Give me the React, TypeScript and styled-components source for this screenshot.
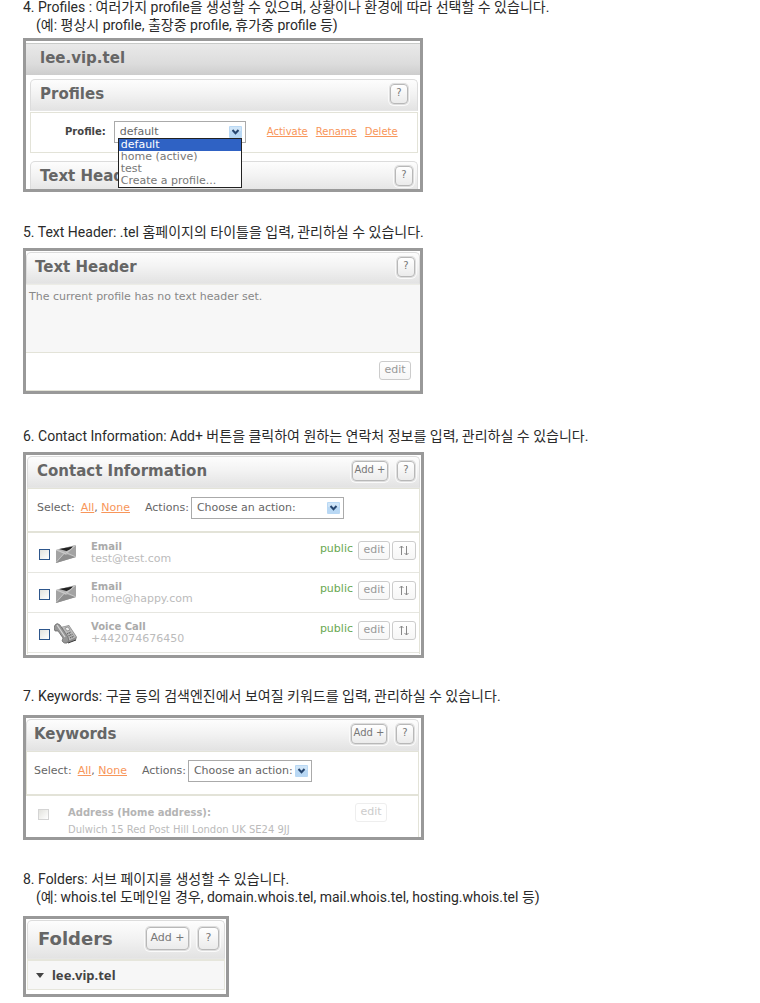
import React from "react";
import styled, { createGlobalStyle, css } from "styled-components";

const ui = `Verdana, "DejaVu Sans", sans-serif`;

const GlobalStyle = createGlobalStyle`
  *, *::before, *::after { box-sizing: border-box; }
  body { margin: 0; background: #fff; color: #333; }
  button, select { font: inherit; color: inherit; margin: 0; }
`;

const Page = styled.main`
  margin-top: -2px;
  padding: 0 23px 6px;
  font-family: ${ui};
  font-size: 11px;
  line-height: 12px;
`;

const Section = styled.section<{ $before?: number }>`
  padding-top: ${(p) => p.$before ?? 0}px;
`;

const Caption = styled.h2<{ $after: number }>`
  margin: 0 0 ${(p) => p.$after}px;
  font: 400 14px/18px Roboto, "Noto Sans CJK KR", sans-serif;
  color: #2a2a2a;
`;

const CaptionNote = styled.span`
  display: block;
  padding-left: 13px;
`;

const Panel = styled.div<{ $width: number; $inset: string }>`
  max-width: ${(p) => p.$width}px;
  border: 3px solid #999;
  padding: ${(p) => p.$inset};
  overflow: hidden;
`;

const DomainBar = styled.div`
  display: flex;
  align-items: center;
  height: 32px;
  padding: 0 14px 4px;
  margin-bottom: 4px;
  border-top: 1px solid #c8cac8;
  background: linear-gradient(#e9e9e9, #dcdcdc 65%, #cdcdcd);
  font-size: 15px;
  font-weight: 700;
  color: #666;
`;

const Header = styled.header<{ $tall?: boolean; $left: number; $right?: number }>`
  display: flex;
  align-items: center;
  gap: 7px;
  height: ${(p) => (p.$tall ? 39 : 32)}px;
  padding: 0 ${(p) => p.$right ?? 4}px 2px ${(p) => p.$left}px;
  border: 1px solid #dcdcdc;
  border-bottom-color: #e6e6e6;
  border-radius: 5px 5px 0 0;
  background: linear-gradient(#fdfdfd, #f3f3f3 45%, #e3e3e3);
`;

const Title = styled.h3<{ $large?: boolean }>`
  flex: 1;
  margin: 0;
  font-size: ${(p) => (p.$large ? 18 : 15)}px;
  line-height: 20px;
  font-weight: 700;
  color: #666;
`;

const HeaderButton = styled.button<{ $large?: boolean; $wide?: boolean }>`
  flex: none;
  width: ${(p) => (p.$wide ? (p.$large ? 43 : 36) : p.$large ? 21 : 18)}px;
  height: ${(p) => (p.$large ? 23 : 20)}px;
  padding: 0 0 2px;
  border: 1px solid #b8b8b8;
  border-radius: 4px;
  background: linear-gradient(#fff, #ebebeb);
  box-shadow: 0 0 0 1px #dedede, 0 0 0 2px #fafafa;
  font-size: ${(p) => (p.$large ? 11 : 10)}px;
  line-height: 12px;
  color: #777;
  white-space: nowrap;
`;

const HeaderButtons = styled.div`
  display: flex;
  gap: 9px;
`;

const ProfileGroup = styled.div`
  padding: 0 2px 0 4px;
`;

const ProfileBody = styled.div`
  display: flex;
  align-items: center;
  height: 41px;
  margin: 1px 0 8px;
  padding: 0 18px 2px 34px;
  border: 1px solid #e3e3d8;
`;

const FieldLabel = styled.label`
  margin-right: 8px;
  font-size: 10px;
  font-weight: 700;
  color: #444;
`;

const SelectBox = styled.span<{ $width: number }>`
  position: relative;
  display: block;
  flex: none;
  width: ${(p) => p.$width}px;
`;

const Select = styled.select`
  appearance: none;
  display: block;
  width: 100%;
  height: 22px;
  padding: 1px 16px 0 5px;
  border: 1px solid #aaa;
  border-radius: 0;
  background: #fff;
  color: #666;
  font-size: 11px;
`;

const Arrow = styled.svg`
  position: absolute;
  top: 5px;
  right: 4px;
  pointer-events: none;
`;

const Menu = styled.ul`
  position: absolute;
  top: 17px;
  left: 4px;
  width: 124px;
  margin: 0;
  padding: 0;
  list-style: none;
  border: 1px solid #222;
  background: #fff;
  color: #777;
  z-index: 1;
`;

const MenuItem = styled.li<{ $on?: boolean }>`
  padding: 0 2px;
  line-height: 12px;
  height: 12px;
  ${(p) => p.$on && css`background: #2f62c4; color: #fff;`}
`;

const Link = styled.a`
  color: #f8965a;
  text-decoration: underline;
`;

const LinkRow = styled.nav`
  display: flex;
  gap: 8px;
  margin-left: 21px;
  font-size: 10px;
`;

const ClippedHeader = styled.div`
  height: 28px;
  overflow: hidden;
`;

const TextBody = styled.p`
  margin: 0;
  height: 69px;
  padding: 6px 3px;
  border-top: 1px solid #ecece6;
  border-bottom: 1px solid #e3e3d8;
  background: #f7f7f7;
  color: #888;
`;

const Footer = styled.div`
  display: flex;
  justify-content: flex-end;
  height: 38px;
  padding: 8px 9px 0;
  border-bottom: 1px solid #e3e3d8;
`;

const SmallButton = styled.button<{ $faint?: boolean; $narrow?: boolean }>`
  flex: none;
  display: flex;
  align-items: center;
  justify-content: center;
  width: ${(p) => (p.$narrow ? 24 : 32)}px;
  height: 19px;
  padding: 0 0 1px;
  border: 1px solid #ccc;
  border-radius: 3px;
  background: linear-gradient(#fff, #f6f6f6);
  color: #999;
  ${(p) => p.$faint && css`border-color: #eee; background: #fff; color: #ccc;`}
`;

const Toolbar = styled.div<{ $left: number }>`
  display: flex;
  align-items: center;
  height: 45px;
  padding: 0 0 5px ${(p) => p.$left}px;
  border: solid #e3e3d8;
  border-width: 1px 1px 2px;
  color: #666;
`;

const Picks = styled.span`
  margin: 0 15px 0 6px;
`;

const ActionLabel = styled.label`
  margin-right: 2px;
`;

const List = styled.ul`
  margin: 0;
  padding: 0 0 1px;
  list-style: none;
  border: solid #e3e3d8;
  border-width: 0 1px;
`;

const Contact = styled.li`
  display: flex;
  align-items: flex-start;
  height: 40px;
  padding: 8px 3px 0 11px;
  border-bottom: 1px solid #e6e6e0;
`;

const Check = styled.input<{ $faint?: boolean }>`
  appearance: none;
  flex: none;
  width: 11px;
  height: 11px;
  margin: ${(p) => (p.$faint ? 2 : 8)}px 0 0;
  border: 1px solid ${(p) => (p.$faint ? "#d4d4d4" : "#2d568c")};
  background: linear-gradient(135deg, #e2e2dd, #fff);
`;

const Picture = styled.svg`
  flex: none;
  margin: 1px 14px 0 4px;
`;

const Info = styled.label`
  flex: 1;
  color: #bbb;
  strong { display: block; font-size: 10px; color: #aaa; }
`;

const Visibility = styled.span`
  margin: 2px 5px 0 0;
  color: #69a850;
`;

const Actions = styled.div`
  display: flex;
  gap: 2px;
`;

const Keyword = styled.div`
  display: flex;
  height: 41px;
  padding: 11px 31px 0 12px;
  border-right: 1px solid #e3e3d8;
`;

const KeywordInfo = styled.label`
  flex: 1;
  margin-left: 19px;
  font-size: 10px;
  color: #bbb;
  strong { display: block; margin-bottom: 5px; color: #b4b4b4; }
`;

const KeywordAction = styled.div`
  margin-top: -4px;
`;

const Folder = styled.div`
  display: flex;
  align-items: center;
  gap: 8px;
  height: 31px;
  margin-bottom: 4px;
  padding: 0 8px;
  border: 2px solid #e6e6dc;
  border-width: 2px 1px 1px;
  background: #f7f7f7;
  font: 700 13px/16px "Noto Sans", sans-serif;
  color: #444;
`;

const DropArrow = () => (
  <Arrow width="13" height="12" viewBox="0 0 13 12" aria-hidden="true">
    <rect width="13" height="12" rx="1" fill="#b9d8f4" />
    <rect x="1" y="1" width="11" height="4" fill="#cfe5f8" />
    <path d="M3.5 4 6.5 7.2 9.5 4" fill="none" stroke="#27466f" strokeWidth="2" />
  </Arrow>
);

const Envelope = () => (
  <Picture width="23" height="22" viewBox="0 0 23 22" aria-hidden="true">
    <path d="M2 8 22 3v12L2 21z" fill="#a3a3a3" />
    <path d="M2 20.5 10.5 12 22 15 2 21z" fill="#8e8e8e" />
    <path d="M2 8 22 3 12 13z" fill="#b5b5b5" />
    <path d="M5 7 19 4.5 16 7.5 12.5 9z" fill="#222" />
    <path d="m2 8 9.5 3.5L22 3M2 20.5l8-9M13 11l9 4" fill="none" stroke="#dcdcdc" strokeWidth=".6" />
  </Picture>
);

const Phone = () => (
  <Picture width="23" height="22" viewBox="0 0 23 22" aria-hidden="true">
    <path d="m7 5 8-2 8 12-1 3-9 3-7-9z" fill="#8c8c8c" />
    <path d="m8 5 7-1 7 11-8 4z" fill="#bcbcbc" />
    <path d="m11 6 3-1 2 3-3 1z" fill="#eee" stroke="#777" strokeWidth=".6" />
    <path d="m13 12 4-2M14.5 14l4-2M16 16l4-2" stroke="#666" strokeWidth="1.3" strokeDasharray="1.3 .6" />
    <path d="M1 3q2-3 5 0l8 12q2 4-1 6-3 1-5-2l1-3-5-7-3 0q-2-3 0-6z" fill="#969696" stroke="#666" strokeWidth=".7" />
    <path d="m3 3 8 12" stroke="#d6d6d6" strokeWidth="1.3" />
    <path d="m14 21 8-3" stroke="#333" />
  </Picture>
);

const MoveIcon = () => (
  <svg width="12" height="12" viewBox="0 0 12 12" aria-hidden="true">
    <path d="M3.5 11V2M1.5 4l2-2 2 2M8.5 2v9M6.5 9l2 2 2-2" fill="none" stroke="#888" />
  </svg>
);

const Help = ({ large }: { large?: boolean }) => (
  <HeaderButton type="button" $large={large} aria-label="Help">?</HeaderButton>
);

const ActionPicker = ({ id, width, left }: { id: string; width: number; left: number }) => (
  <Toolbar $left={left}>
    <span>Select:</span>
    <Picks>
      <Link href="#all">All</Link>, <Link href="#none">None</Link>
    </Picks>
    <ActionLabel htmlFor={id}>Actions:</ActionLabel>
    <SelectBox $width={width}>
      <Select id={id}>
        <option>Choose an action:</option>
      </Select>
      <DropArrow />
    </SelectBox>
  </Toolbar>
);

const contacts = [
  { id: "c1", kind: "Email", value: "test@test.com", Icon: Envelope },
  { id: "c2", kind: "Email", value: "home@happy.com", Icon: Envelope },
  { id: "c3", kind: "Voice Call", value: "+442074676450", Icon: Phone },
];

const profiles = ["default", "home (active)", "test", "Create a profile..."];

export default function App() {
  return (
    <>
      <GlobalStyle />
      <Page>
        <Section>
          <Caption $after={4}>
            4. Profiles : 여러가지 profile을 생성할 수 있으며, 상황이나 환경에 따라 선택할 수 있습니다.
            <CaptionNote>(예: 평상시 profile, 출장중 profile, 휴가중 profile 등)</CaptionNote>
          </Caption>
          <Panel $width={400} $inset="2px 0 0">
            <DomainBar>lee.vip.tel</DomainBar>
            <ProfileGroup>
              <Header $left={9} $right={9}>
                <Title>Profiles</Title>
                <Help />
              </Header>
              <ProfileBody>
                <FieldLabel htmlFor="profile">Profile:</FieldLabel>
                <SelectBox $width={132}>
                  <Select id="profile" defaultValue="default">
                    {profiles.map((p) => <option key={p}>{p}</option>)}
                  </Select>
                  <DropArrow />
                  <Menu role="listbox" aria-label="Profile">
                    {profiles.map((p, i) => (
                      <MenuItem key={p} role="option" aria-selected={i === 0} $on={i === 0}>{p}</MenuItem>
                    ))}
                  </Menu>
                </SelectBox>
                <LinkRow>
                  <Link href="#activate">Activate</Link>
                  <Link href="#rename">Rename</Link>
                  <Link href="#delete">Delete</Link>
                </LinkRow>
              </ProfileBody>
              <ClippedHeader>
                <Header $left={9}>
                  <Title>Text Header</Title>
                  <Help />
                </Header>
              </ClippedHeader>
            </ProfileGroup>
          </Panel>
        </Section>

        <Section $before={31}>
          <Caption $after={7}>5. Text Header: .tel 홈페이지의 타이틀을 입력, 관리하실 수 있습니다.</Caption>
          <Panel $width={400} $inset="1px 0 0">
            <Header $left={8}>
              <Title>Text Header</Title>
              <Help />
            </Header>
            <TextBody>The current profile has no text header set.</TextBody>
            <Footer>
              <SmallButton type="button">edit</SmallButton>
            </Footer>
          </Panel>
        </Section>

        <Section $before={33}>
          <Caption $after={7}>6. Contact Information: Add+ 버튼을 클릭하여 원하는 연락처 정보를 입력, 관리하실 수 있습니다.</Caption>
          <Panel $width={401} $inset="1px 1px 1px">
            <Header $left={9}>
              <Title>Contact Information</Title>
              <HeaderButtons>
                <HeaderButton type="button" $wide>Add +</HeaderButton>
                <Help />
              </HeaderButtons>
            </Header>
            <ActionPicker id="contact-action" width={153} left={9} />
            <List>
              {contacts.map(({ id, kind, value, Icon }) => (
                <Contact key={id}>
                  <Check type="checkbox" id={id} />
                  <Icon />
                  <Info htmlFor={id}><strong>{kind}</strong>{value}</Info>
                  <Visibility>public</Visibility>
                  <Actions>
                    <SmallButton type="button">edit</SmallButton>
                    <SmallButton type="button" $narrow aria-label="Move"><MoveIcon /></SmallButton>
                  </Actions>
                </Contact>
              ))}
            </List>
          </Panel>
        </Section>

        <Section $before={29}>
          <Caption $after={10}>7. Keywords: 구글 등의 검색엔진에서 보여질 키워드를 입력, 관리하실 수 있습니다.</Caption>
          <Panel $width={401} $inset="1px 2px 0 0">
            <Header $left={7}>
              <Title>Keywords</Title>
              <HeaderButtons>
                <HeaderButton type="button" $wide>Add +</HeaderButton>
                <Help />
              </HeaderButtons>
            </Header>
            <ActionPicker id="keyword-action" width={124} left={7} />
            <Keyword>
              <Check type="checkbox" id="k1" $faint />
              <KeywordInfo htmlFor="k1">
                <strong>Address (Home address):</strong>
                Dulwich 15 Red Post Hill London UK SE24 9JJ
              </KeywordInfo>
              <KeywordAction>
                <SmallButton type="button" $faint>edit</SmallButton>
              </KeywordAction>
            </Keyword>
          </Panel>
        </Section>

        <Section $before={30}>
          <Caption $after={10}>
            8. Folders: 서브 페이지를 생성할 수 있습니다.
            <CaptionNote>(예: whois.tel 도메인일 경우, domain.whois.tel, mail.whois.tel, hosting.whois.tel 등)</CaptionNote>
          </Caption>
          <Panel $width={206} $inset="1px 1px 0">
            <Header $tall $left={10} $right={5}>
              <Title $large>Folders</Title>
              <HeaderButtons>
                <HeaderButton type="button" $wide $large>Add +</HeaderButton>
                <Help large />
              </HeaderButtons>
            </Header>
            <Folder>
              <svg width="8" height="5" viewBox="0 0 8 5" aria-hidden="true">
                <path d="M0 0h8L4 5z" fill="#444" />
              </svg>
              lee.vip.tel
            </Folder>
          </Panel>
        </Section>
      </Page>
    </>
  );
}
